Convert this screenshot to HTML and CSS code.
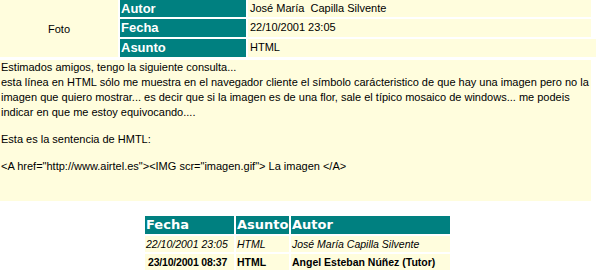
FILE: index.html
```html
<!DOCTYPE html>
<html lang="es">
<head>
    <meta charset="UTF-8">
    <title>Mensaje</title>
    <link rel="stylesheet" href="styles.css">
</head>
<body>
    <div class="msg-head">
        <div class="photo">Foto</div>
        <div class="label">Autor</div>
        <div class="value">José María&nbsp; Capilla Silvente</div>
        <div class="label">Fecha</div>
        <div class="value">22/10/2001 23:05</div>
        <div class="label">Asunto</div>
        <div class="value wide">HTML</div>
    </div>

    <div class="msg-body">
        <p>Estimados amigos, tengo la siguiente consulta...<br>
        esta línea en HTML sólo me muestra en el navegador cliente el símbolo carácteristico de que hay una imagen pero no la imagen que quiero mostrar... es decir que si la imagen es de una flor, sale el típico mosaico de windows... me podeis indicar en que me estoy equivocando....</p>
        <p>Esta es la sentencia de HMTL:</p>
        <p>&lt;A href="http://www.airtel.es"&gt;&lt;IMG scr="imagen.gif"&gt; La imagen &lt;/A&gt;</p>
    </div>

    <div class="thread">
        <div class="th">Fecha</div>
        <div class="th">Asunto</div>
        <div class="th">Autor</div>

        <div class="td reply">22/10/2001 23:05</div>
        <div class="td reply">HTML</div>
        <div class="td reply">José María Capilla Silvente</div>

        <div class="td current date">23/10/2001 08:37</div>
        <div class="td current">HTML</div>
        <div class="td current">Angel Esteban Núñez (Tutor)</div>
    </div>
</body>
</html>
```

FILE: styles.css
```css
body {
    margin: 0;
    font-family: "Liberation Sans", Arial, sans-serif;
    font-size: 11px;
    color: #000;
    background: #fff;
}
.msg-head {
    display: grid;
    grid-template-columns: 118px 126px 343px 3px;
    grid-template-rows: 17px 18px 18px;
    gap: 2px;
}
.photo {
    grid-row: 1 / 4;
    background-color: #fffddd;
    display: flex;
    align-items: center;
    justify-content: center;
}
.label {
    grid-column: 2;
    background-color: #008080;
    color: #fff;
    font-weight: bold;
    font-size: 13px;
    line-height: 17px;
    padding-left: 1px;
}
.value {
    grid-column: 3;
    background-color: #fffddd;
    padding-left: 2px;
    line-height: 17px;
}
.value.wide {
    grid-column: 3 / 5; /* this row runs a bit past the others */
}
.msg-body {
    width: 591px;
    margin-top: 3px;
    background-color: #fffddd;
    line-height: 15px;
    padding: 0 0 27px 1px;
    box-sizing: border-box;
}
.msg-body p {
    margin: 12px 0 0;
}
.msg-body p:first-child {
    margin-top: 0;
}
.thread {
    display: grid;
    grid-template-columns: 89px 53px 159px;
    grid-template-rows: 18px 16px 16px;
    gap: 2px;
    margin: 15px 0 0 145px;
    width: 305px;
}
.th {
    background-color: #008080;
    color: #fff;
    font-family: "DejaVu Sans", Verdana, sans-serif;
    font-weight: bold;
    font-size: 13px;
    line-height: 18px;
    padding-left: 1px;
}
.td {
    background-color: #fffddd;
    font-size: 10.5px;
    line-height: 16px;
    padding-left: 1px;
    white-space: nowrap;
    overflow: hidden;
}
.td.reply {
    font-style: italic;
}
.td.current {
    font-weight: bold;
}
.td.date {
    padding-left: 3px;
    letter-spacing: -0.2px;
}
```
